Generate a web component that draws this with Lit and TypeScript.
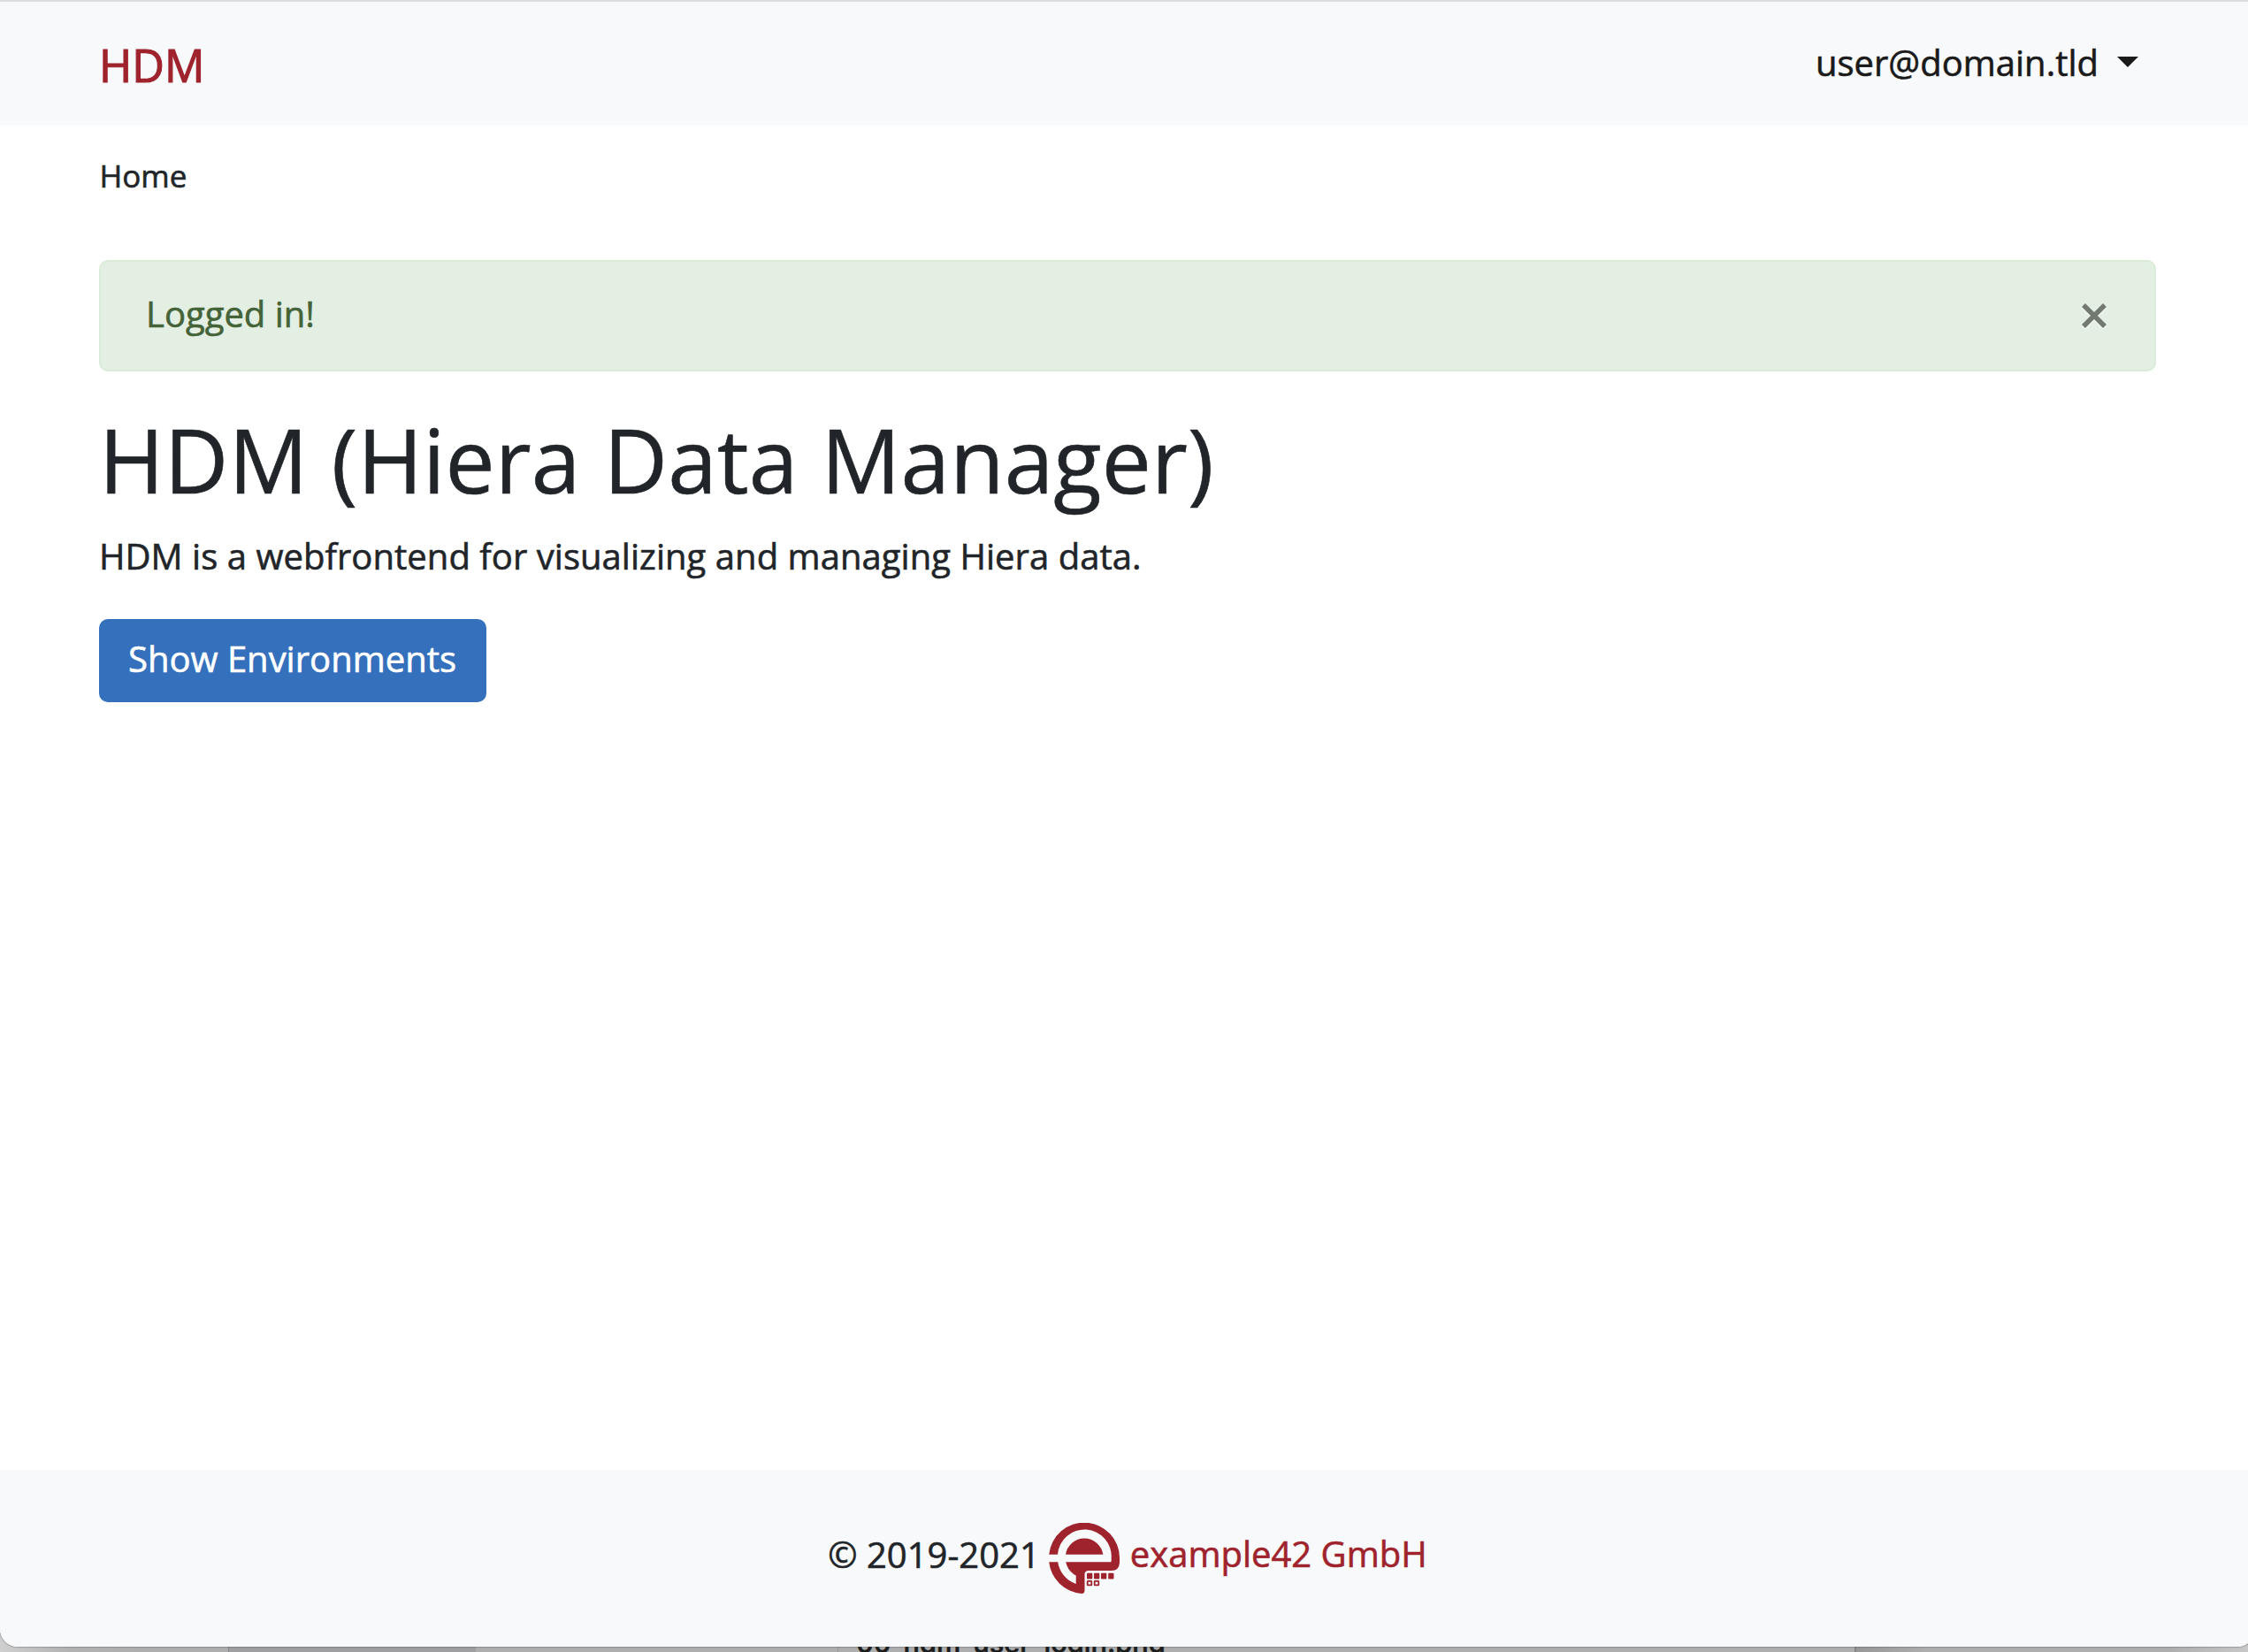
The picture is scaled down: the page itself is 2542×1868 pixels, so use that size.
import { LitElement, html, css, svg } from "lit";
import { customElement } from "lit/decorators.js";

@customElement("app-root")
export class AppRoot extends LitElement {
  static styles = css`
    :host { display: block; }
    * { box-sizing: border-box; }
    .desktop {
      width: 100%; height: 1868px; overflow: hidden; display: flex; flex-direction: column;
      font: 400 40px/60px "Open Sans", sans-serif; color: #212529;
      -webkit-text-stroke: 0.6px currentColor;
      background: linear-gradient(90deg, #cfcfcf 0, #b2b2b2 80px, #aeaeae 160px, #aeaeae calc(100% - 90px), #c8c8c8 100%);
    }
    .window {
      width: calc(100% + 8px); height: 1862px; flex: none; display: flex; flex-direction: column;
      background: #fff; border-top: 2px solid #dcdddf;
      border-radius: 0 0 20px 20px; overflow: hidden; box-shadow: 0 0 2px #444;
      position: relative; z-index: 1;
    }
    .nav {
      height: 140px; flex: none; display: flex; align-items: center; justify-content: space-between;
      padding: 0 132px 0 112px; background: #f8f9fb;
    }
    .brand { font-size: 50.5px; line-height: 76px; color: #9f232d; -webkit-text-stroke-width: 1.2px; margin-top: 3px; }
    .user { display: flex; align-items: center; gap: 21px; color: #1a1a1a; margin-top: -2px; }
    .caret { width: 24px; height: 12px; fill: currentColor; margin-top: -2px; }
    .main { flex: 1; display: flex; flex-direction: column; align-items: flex-start; padding: 0 112px 0 112px; }
    .crumb { font-size: 35px; line-height: 54px; margin-top: 30px; padding-left: 0.5px; }
    .alert {
      align-self: stretch; height: 126px; margin-top: 68px; padding: 0 53px 0 51px;
      display: flex; align-items: center; justify-content: space-between;
      background: #e3efe2; border: 2px solid #daecd8; border-radius: 10px; color: #446339;
    }
    .alert span { padding-bottom: 4px; }
    .close { width: 30px; height: 34px; overflow: visible; }
    h1 { margin: 39px 0 0; font-size: 100px; line-height: 120px; font-weight: 400; letter-spacing: 0.12px; }
    p { margin: 20px 0 0; letter-spacing: 0.04px; }
    .btn {
      margin-top: 41px; height: 94px; width: 438px; padding: 0 1px 5px 0; border: 0; border-radius: 10px;
      font: inherit; color: #fff; background: #3570bd;
    }
    .footer {
      height: 200px; flex: none; display: flex; align-items: center; justify-content: center;
      background: #f8f9fb; gap: 12px; padding: 0 8px 0 8px;
    }
    .footer span { padding-bottom: 9px; }
    .footer .link { padding-bottom: 11px; color: #9f232d; }
    .logo { width: 80px; height: 80px; margin-left: -2px; }
    .behind { height: 6px; flex: none; display: flex; }
    .pane { width: 258px; }
    .pane.dark { width: 280px; background: #9f9fa2; border-left: 1px solid #858585; }
    .pane.mid { width: 410px; border-right: 1px solid #999; }
    .pane.list { width: 1151px; padding-left: 20px; border-right: 2px solid #858585; display: flex; align-items: flex-start; }
    .pane.rest { flex: 1; background: linear-gradient(90deg, #979797, #aeaeae00 80px); }
    .file { font: 500 30.7px/40px Inter, sans-serif; color: #1c1c1c; margin-top: -24px; white-space: nowrap; }
  `;

  render() {
    return html`<div class="desktop">
      <div class="window">
        <header class="nav">
          <span class="brand">HDM</span>
          <span class="user"><span>user@domain.tld</span>
            <svg class="caret" viewBox="0 0 24 12"><path d="M0 0H24L12 12Z" /></svg></span>
        </header>
        <main class="main">
          <div class="crumb">Home</div>
          <div class="alert"><span>Logged in!</span>
            <svg class="close" viewBox="0 0 30 34"><path d="M3 5L27 29M27 5L3 29" stroke="#fff" stroke-opacity=".5" stroke-width="5.5" transform="translate(0 2)" /><path d="M3 5L27 29M27 5L3 29" stroke="#727971" stroke-width="5.5" /></svg>
          </div>
          <h1>HDM (Hiera Data Manager)</h1>
          <p>HDM is a webfrontend for visualizing and managing Hiera data.</p>
          <button class="btn">Show Environments</button>
        </main>
        <footer class="footer">
          <span>© 2019-2021</span>
          ${this.logo()}
          <span class="link">example42 GmbH</span>
        </footer>
      </div>
      <div class="behind">
        <div class="pane"></div>
        <div class="pane dark"></div>
        <div class="pane mid"></div>
        <div class="pane list"><span class="file">00_hdm_user_login.png</span></div>
        <div class="pane rest"></div>
      </div>
    </div>`;
  }

  private logo() {
    return svg`<svg class="logo" viewBox="0 0 80 80">
      <g fill="#9f232d">
        <path d="M0.2 35.7A40 40 0 0 1 80 40V45Q79.500 54 71 54H45Q40.500 54 40.500 58.500V76Q40.500 80 37 79.900A40 40 0 0 1 0.200 44.300H10.200A31 31 0 0 0 30.700 69V59.500A22 22 0 0 1 19.200 44.300H70.300Q71 42 70.700 40A30.300 30.300 0 0 0 10 35.700Z" />
        <path d="M19 35.700A21.400 21.400 0 0 1 61.300 35.700Z" />
        <rect x="43" y="56.700" width="6.300" height="6.800" rx="1" />
        <rect x="51" y="56.700" width="6.300" height="6.800" rx="1" />
        <rect x="59" y="56.700" width="6.300" height="6.800" rx="1" />
        <rect x="67.200" y="56.700" width="6.300" height="6.800" rx="1" />
      </g>
      <g fill="none" stroke="#9f232d" stroke-width="1.800">
        <rect x="43.700" y="65.800" width="4.600" height="4.600" rx=".5" />
        <rect x="51.700" y="65.800" width="4.600" height="4.600" rx=".5" />
      </g>
    </svg>`;
  }
}
